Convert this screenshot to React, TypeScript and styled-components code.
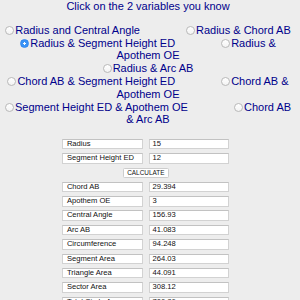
import { Fragment } from "react";
import styled, { createGlobalStyle } from "styled-components";

const GlobalStyle = createGlobalStyle`
  body {
    margin: 0;
    background: #ededed;
    font-family: "Liberation Sans", Arial, sans-serif;
  }
`;

const Page = styled.div`
  width: 296px;
  color: #00008b;
  font-size: 11px;
  line-height: 12.8px;
  text-align: center;
`;

const Title = styled.p`
  margin: 0 0 11px;
`;

const ChoiceRow = styled.div`
  white-space: nowrap;
`;

const Choice = styled.label`
  cursor: pointer;
`;

const Radio = styled.span<{ $checked?: boolean }>`
  display: inline-block;
  box-sizing: border-box;
  width: 9px;
  height: 9px;
  margin-right: 1px;
  vertical-align: -1.3px;
  border-radius: 50%;
  border: 1px solid ${(p) => (p.$checked ? "#2f86f0" : "#b9b9b9")};
  background: ${(p) =>
    p.$checked
      ? "radial-gradient(circle, #fff 0 1.1px, #3a93f6 1.4px)"
      : "linear-gradient(#ffffff, #f3f3f3)"};
`;

const Spacer = styled.span`
  display: inline-block;
  width: 46px;
`;

const Form = styled.div`
  display: grid;
  grid-template-columns: 80.4px 80.4px;
  column-gap: 6.3px;
  row-gap: 3.9px;
  margin: 12.8px 0 0 62.3px;
  width: 167.1px;
  text-align: left;
`;

const Field = styled.div<{ $label?: boolean }>`
  box-sizing: border-box;
  height: 10.5px;
  padding: 0 ${(p) => (p.$label ? "3.6px" : "2.6px")};
  background: #fff;
  border: 1px solid #d2d2d2;
  border-top-color: #c2c2c2;
  color: #111;
  font-size: 7.6px;
  line-height: 8.5px;
  white-space: nowrap;
  overflow: hidden;
`;

const CalcButton = styled.button`
  grid-column: 1 / -1;
  justify-self: center;
  box-sizing: border-box;
  width: 46px;
  height: 10px;
  padding: 0;
  background: #fff;
  border: 1px solid #cdcdcd;
  border-radius: 1.5px;
  color: #111;
  font-family: "Liberation Sans", Arial, sans-serif;
  font-size: 6.4px;
  line-height: 8px;
`;

const inputs = [
  ["Radius", "15"],
  ["Segment Height ED", "12"],
];

const results = [
  ["Chord AB", "29.394"],
  ["Apothem OE", "3"],
  ["Central Angle", "156.93"],
  ["Arc AB", "41.083"],
  ["Circumference", "94.248"],
  ["Segment Area", "264.03"],
  ["Triangle Area", "44.091"],
  ["Sector Area", "308.12"],
  ["Total Circle Area", "706.86"],
];

const App = () => {
  return (
    <Page>
      <GlobalStyle />
      <Title>Click on the 2 variables you know</Title>

      <ChoiceRow>
        <Choice><Radio />Radius and Central Angle</Choice>
        <Spacer />
        <Choice><Radio />Radius &amp; Chord AB</Choice>
      </ChoiceRow>
      <ChoiceRow>
        <Choice><Radio $checked />Radius &amp; Segment Height ED</Choice>
        <Spacer />
        <Choice><Radio />Radius &amp;<br />Apothem OE</Choice>
      </ChoiceRow>
      <ChoiceRow>
        <Choice><Radio />Radius &amp; Arc AB</Choice>
      </ChoiceRow>
      <ChoiceRow>
        <Choice><Radio />Chord AB &amp; Segment Height ED</Choice>
        <Spacer />
        <Choice><Radio />Chord AB &amp;<br />Apothem OE</Choice>
      </ChoiceRow>
      <ChoiceRow>
        <Choice><Radio />Segment Height ED &amp; Apothem OE</Choice>
        <Spacer />
        <Choice><Radio />Chord AB<br />&amp; Arc AB</Choice>
      </ChoiceRow>

      <Form>
        {inputs.map(([label, value]) => (
          <Fragment key={label}>
            <Field $label>{label}</Field>
            <Field>{value}</Field>
          </Fragment>
        ))}
        <CalcButton>CALCULATE</CalcButton>
        {results.map(([label, value]) => (
          <Fragment key={label}>
            <Field $label>{label}</Field>
            <Field>{value}</Field>
          </Fragment>
        ))}
      </Form>
    </Page>
  );
};

export default App;
